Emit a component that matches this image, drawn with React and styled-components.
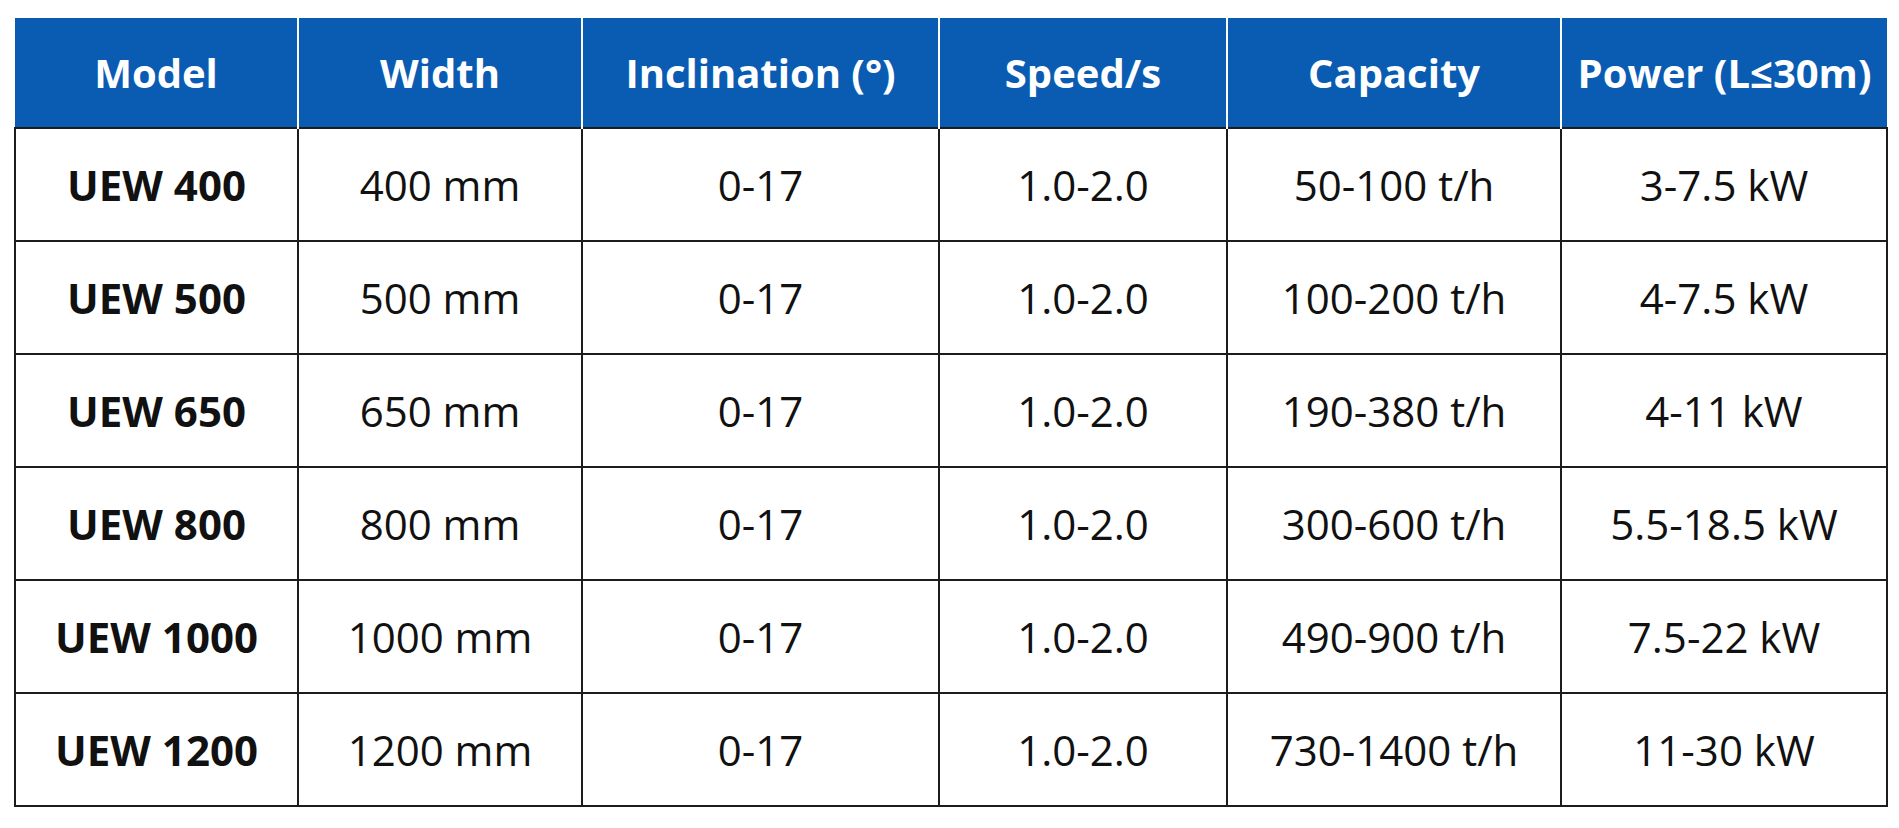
import React from 'react';
import styled, { createGlobalStyle } from 'styled-components';

const GlobalStyle = createGlobalStyle`
  html, body {
    margin: 0;
    padding: 0;
    background: #ffffff;
  }
  body {
    font-family: 'Open Sans', 'Noto Sans', sans-serif;
  }
`;

const Page = styled.div`
  padding: 18px 13px 0 14px;
`;

const SpecTable = styled.table`
  width: 1872px;
  border-collapse: collapse;
  table-layout: fixed;
`;

const HeadCell = styled.th`
  height: 109px;
  padding: 0;
  background: #0a5cb3;
  color: #ffffff;
  font-size: 40px;
  font-weight: 700;
  text-align: center;
  vertical-align: middle;
  border-left: 2px solid #ffffff;
  border-right: 2px solid #ffffff;

  &:first-child {
    border-left: none;
  }
  &:last-child {
    border-right: none;
  }
`;

const Cell = styled.td`
  height: 111px;
  padding: 0;
  color: #111111;
  font-size: 42px;
  font-weight: ${(p) => (p.$bold ? 700 : 400)};
  text-align: center;
  vertical-align: middle;
  border: 2px solid #1c1c1c;
  white-space: nowrap;
`;

const columns = [
  { label: 'Model', width: 283 },
  { label: 'Width', width: 284 },
  { label: 'Inclination (°)', width: 357 },
  { label: 'Speed/s', width: 288 },
  { label: 'Capacity', width: 334 },
  { label: 'Power (L≤30m)', width: 326 },
];

const rows = [
  ['UEW 400', '400 mm', '0-17', '1.0-2.0', '50-100 t/h', '3-7.5 kW'],
  ['UEW 500', '500 mm', '0-17', '1.0-2.0', '100-200 t/h', '4-7.5 kW'],
  ['UEW 650', '650 mm', '0-17', '1.0-2.0', '190-380 t/h', '4-11 kW'],
  ['UEW 800', '800 mm', '0-17', '1.0-2.0', '300-600 t/h', '5.5-18.5 kW'],
  ['UEW 1000', '1000 mm', '0-17', '1.0-2.0', '490-900 t/h', '7.5-22 kW'],
  ['UEW 1200', '1200 mm', '0-17', '1.0-2.0', '730-1400 t/h', '11-30 kW'],
];

export default function App() {
  return (
    <Page>
      <GlobalStyle />
      <SpecTable>
        <colgroup>
          {columns.map((c) => (
            <col key={c.label} style={{ width: c.width }} />
          ))}
        </colgroup>
        <thead>
          <tr>
            {columns.map((c) => (
              <HeadCell key={c.label}>{c.label}</HeadCell>
            ))}
          </tr>
        </thead>
        <tbody>
          {rows.map((row) => (
            <tr key={row[0]}>
              {row.map((value, i) => (
                <Cell key={i} $bold={i === 0}>
                  {value}
                </Cell>
              ))}
            </tr>
          ))}
        </tbody>
      </SpecTable>
    </Page>
  );
}
